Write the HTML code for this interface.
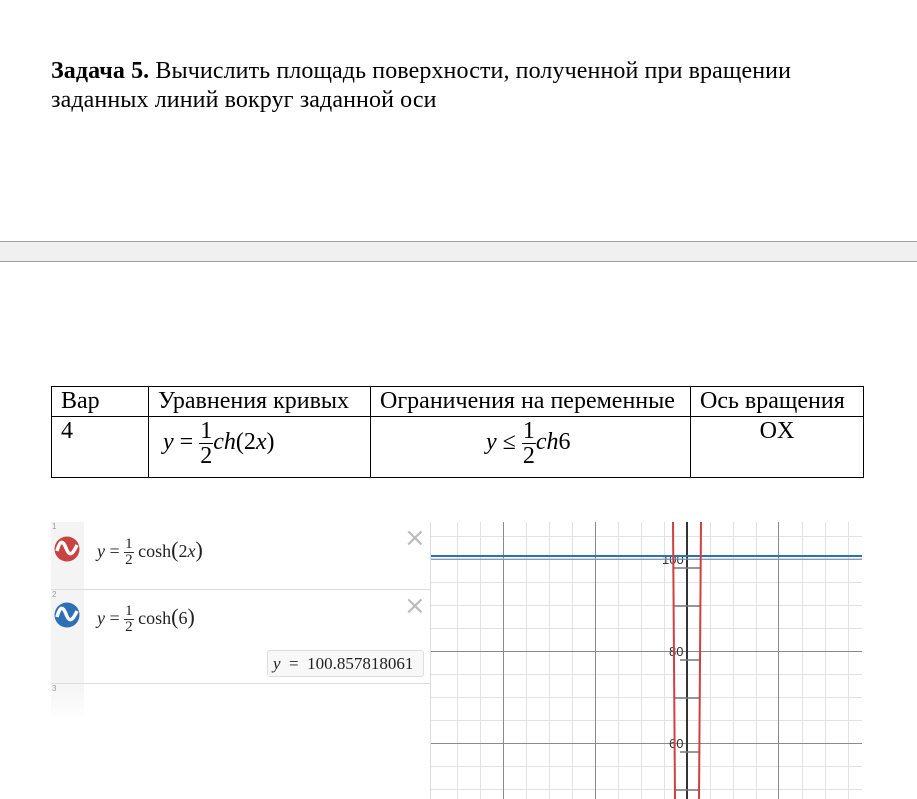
<!DOCTYPE html>
<html><head><meta charset="utf-8"><style>
body{margin:0;width:917px;height:799px;background:#fff;position:relative;overflow:hidden;font-family:"Liberation Serif",serif;color:#000}
.a{position:absolute}
.t{font-size:24px;line-height:29px;left:51px;top:57px;white-space:nowrap;letter-spacing:0.1px}
table{position:absolute;left:51px;top:386px;border-collapse:collapse;font-size:24px;table-layout:fixed;width:812px}
td{border:1px solid #000;padding:0 9px;vertical-align:top;height:29px;line-height:29px;white-space:nowrap;overflow:hidden}
.fr{display:inline-block;vertical-align:middle;text-align:center;line-height:24px}
.fr span{display:block}
.fr .n{border-bottom:1px solid #000;padding:0 1px}
.m{font-family:"Liberation Serif",serif;font-size:18px;color:#222}
.sf{display:inline-block;vertical-align:middle;text-align:center;font-size:15px;line-height:15px}
.sf .n{display:block;border-bottom:1px solid #333;padding:0 1px}
.x{color:#bbb;font-size:26px;font-family:"DejaVu Sans",sans-serif}
</style></head><body>
<div class="a t"><b>Задача 5.</b> Вычислить площадь поверхности, полученной при вращении<br>заданных линий вокруг заданной оси</div>
<div class="a" style="left:0;top:241px;width:917px;height:19px;background:#f0f0f0;border-top:1px solid #a0a0a0;border-bottom:1px solid #a0a0a0"></div>
<table>
<colgroup><col style="width:97px"><col style="width:222px"><col style="width:320px"><col style="width:173px"></colgroup>
<tr><td>Вар</td><td>Уравнения кривых</td><td>Ограничения на переменные</td><td>Ось вращения</td></tr>
<tr><td style="height:60px">4</td>
<td style="padding-left:14px"><div style="margin-top:2px"><i>y</i> = <span class="fr"><span class="n">1</span><span>2</span></span><i>ch</i>(2<i>x</i>)</div></td>
<td style="padding-left:115px"><div style="margin-top:2px"><i>y</i> ≤ <span class="fr"><span class="n">1</span><span>2</span></span><i>ch</i>6</div></td>
<td style="text-align:center">OX</td></tr>
</table>

<svg class="a" style="left:430px;top:522px" width="432" height="277">
<g stroke="#e2e2e2" stroke-width="1">
<line x1="27.5" y1="0" x2="27.5" y2="277"/><line x1="50.5" y1="0" x2="50.5" y2="277"/><line x1="96.5" y1="0" x2="96.5" y2="277"/><line x1="119.5" y1="0" x2="119.5" y2="277"/><line x1="142.5" y1="0" x2="142.5" y2="277"/><line x1="188.5" y1="0" x2="188.5" y2="277"/><line x1="211.5" y1="0" x2="211.5" y2="277"/><line x1="234.5" y1="0" x2="234.5" y2="277"/><line x1="280.5" y1="0" x2="280.5" y2="277"/><line x1="303.5" y1="0" x2="303.5" y2="277"/><line x1="326.5" y1="0" x2="326.5" y2="277"/><line x1="372.5" y1="0" x2="372.5" y2="277"/><line x1="395.5" y1="0" x2="395.5" y2="277"/><line x1="418.5" y1="0" x2="418.5" y2="277"/>
<line x1="0" y1="14.5" x2="432" y2="14.5"/><line x1="0" y1="60.5" x2="432" y2="60.5"/><line x1="0" y1="83.5" x2="432" y2="83.5"/><line x1="0" y1="106.5" x2="432" y2="106.5"/><line x1="0" y1="152.5" x2="432" y2="152.5"/><line x1="0" y1="175.5" x2="432" y2="175.5"/><line x1="0" y1="198.5" x2="432" y2="198.5"/><line x1="0" y1="244.5" x2="432" y2="244.5"/><line x1="0" y1="267.5" x2="432" y2="267.5"/>
</g>
<g stroke="#8a8a8a" stroke-width="1">
<line x1="73.5" y1="0" x2="73.5" y2="277"/><line x1="165.5" y1="0" x2="165.5" y2="277"/><line x1="348.5" y1="0" x2="348.5" y2="277"/>
<line x1="0" y1="37.5" x2="432" y2="37.5"/><line x1="0" y1="129.5" x2="432" y2="129.5"/><line x1="0" y1="221.5" x2="432" y2="221.5"/>
</g>
<line x1="257" y1="0" x2="257" y2="277" stroke="#333" stroke-width="2"/>
<g stroke="#777" stroke-width="1.5"><line x1="243" y1="46" x2="270" y2="46"/><line x1="243" y1="84" x2="270" y2="84"/><line x1="244" y1="176" x2="270" y2="176"/><line x1="244" y1="268" x2="270" y2="268"/><line x1="250" y1="138" x2="270" y2="138"/><line x1="250" y1="230" x2="270" y2="230"/></g>
<g fill="#333" font-family="Liberation Sans,sans-serif" font-size="13"><text x="232" y="42">100</text><text x="239" y="134">80</text><text x="239" y="226">60</text></g>
<line x1="0" y1="34" x2="432" y2="34" stroke="#2f6fb5" stroke-width="2"/>
<line x1="0" y1="37" x2="432" y2="37" stroke="#8fb0d6" stroke-width="1"/>
<line x1="243" y1="0" x2="245" y2="277" stroke="#d04040" stroke-width="2"/>
<line x1="271" y1="0" x2="269" y2="277" stroke="#d04040" stroke-width="2"/>
</svg>

<div class="a" style="left:51px;top:522px;width:379px;height:277px;background:#fff;border-right:1px solid #ddd"></div>
<div class="a" style="left:51px;top:522px;width:33px;height:200px;background:linear-gradient(#f4f4f4 80%,#fff)"></div>
<div class="a" style="left:51px;top:589px;width:379px;height:1px;background:#ddd"></div>
<div class="a" style="left:51px;top:683px;width:379px;height:1px;background:#ddd"></div>
<div class="a" style="left:52px;top:522px;font:8px 'Liberation Sans',sans-serif;color:#999">1</div>
<div class="a" style="left:52px;top:590px;font:8px 'Liberation Sans',sans-serif;color:#999">2</div>
<div class="a" style="left:52px;top:684px;font:8px 'Liberation Sans',sans-serif;color:#999">3</div>
<svg class="a" style="left:54px;top:536px" width="26" height="26"><circle cx="13" cy="13" r="12.5" fill="#c74440"/><path d="M3 15 C6 4 9 4 12 12 C15 20 18 20 23 9" stroke="#fff" stroke-width="3.5" fill="none"/></svg>
<svg class="a" style="left:54px;top:602px" width="26" height="26"><circle cx="13" cy="13" r="12.5" fill="#2d70b3"/><path d="M3 15 C6 4 9 4 12 12 C15 20 18 20 23 9" stroke="#fff" stroke-width="3.5" fill="none"/></svg>
<div class="a m" style="left:97px;top:537px"><i>y</i> = <span class="sf"><span class="n">1</span>2</span> cosh<span style="font-size:22px">(</span>2<i>x</i><span style="font-size:22px">)</span></div>
<div class="a m" style="left:97px;top:604px"><i>y</i> = <span class="sf"><span class="n">1</span>2</span> cosh<span style="font-size:22px">(</span>6<span style="font-size:22px">)</span></div>
<div class="a x" style="left:404px;top:523px">×</div>
<div class="a x" style="left:404px;top:591px">×</div>
<div class="a m" style="left:267px;top:650px;width:155px;height:25px;line-height:25px;border:1px solid #ddd;border-radius:3px;background:#f8f8f8;font-size:17px;text-indent:5px;white-space:nowrap"><i>y</i> &nbsp;= &nbsp;100.857818061</div>
</body></html>
